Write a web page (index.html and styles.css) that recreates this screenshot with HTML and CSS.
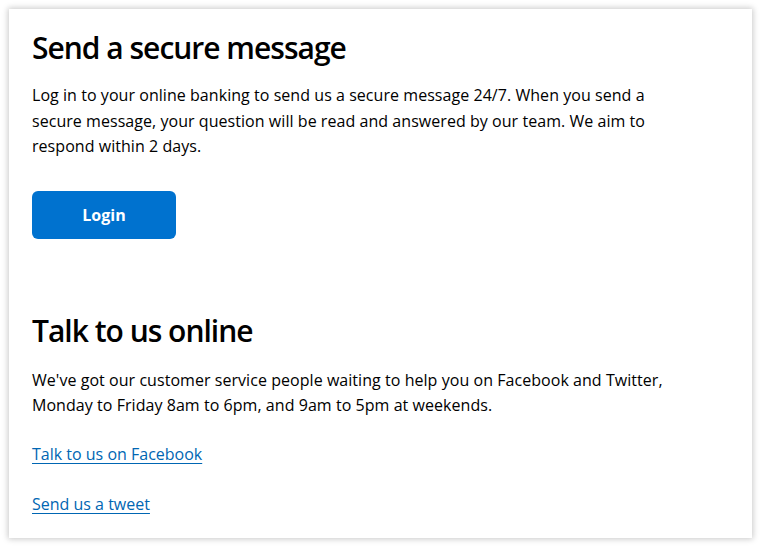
FILE: index.html
```html
<!DOCTYPE html>
<html lang="en">
<head>
<meta charset="utf-8">
<title>Contact</title>
<link rel="stylesheet" href="styles.css">
</head>
<body>
<main class="card">
  <section class="block">
    <h1 class="title">Send a secure message</h1>
    <p class="text">Log in to your online banking to send us a secure message 24/7. When you send a secure message, your question will be read and answered by our team. We aim to respond within 2 days.</p>
    <a class="button" href="#">Login</a>
  </section>
  <section class="block block-second">
    <h2 class="title">Talk to us online</h2>
    <p class="text text-second">We've got our customer service people waiting to help you on Facebook and Twitter, Monday to Friday 8am to 6pm, and 9am to 5pm at weekends.</p>
    <p class="link-row link-first"><a class="link" href="#">Talk to us on Facebook</a></p>
    <p class="link-row"><a class="link" href="#">Send us a tweet</a></p>
  </section>
</main>
</body>
</html>
```
FILE: styles.css
```css
html, body {
  margin: 0;
  padding: 0;
  background: #ffffff;
}
body {
  padding: 9px 8px 9px 9px;
  font-family: "Open Sans", "Liberation Sans", sans-serif;
  color: #000000;
}
.card {
  display: block;
  width: 743px;
  height: 529px;
  box-sizing: border-box;
  background: #ffffff;
  box-shadow: 0 0 6px 1px rgba(0, 0, 0, 0.22);
  padding: 21px 23px 0 23px;
}
.block {
  display: flex;
  flex-direction: column;
  align-items: flex-start;
}
.block-second {
  margin-top: 74px;
}
.title {
  margin: 0;
  font-size: 30px;
  font-weight: 600;
  line-height: 36px;
  letter-spacing: -1px;
}
.text {
  margin: 17px 0 0 0;
  width: 645px;
  font-size: 16px;
  line-height: 25.5px;
  letter-spacing: 0.05px;
}
.text-second {
  margin-top: 19px;
}
.button {
  margin-top: 31px;
  display: flex;
  align-items: center;
  justify-content: center;
  width: 144px;
  height: 48px;
  border-radius: 6px;
  background: #0072cf;
  color: #ffffff;
  font-weight: 700;
  font-size: 16px;
  text-decoration: none;
}
.link-row {
  margin: 24px 0 0 0;
  font-size: 16px;
  line-height: 26px;
}
.link-first {
  margin-top: 22px;
}
.link {
  color: #0066b3;
  text-decoration: underline;
  text-underline-offset: 3px;
}
```
